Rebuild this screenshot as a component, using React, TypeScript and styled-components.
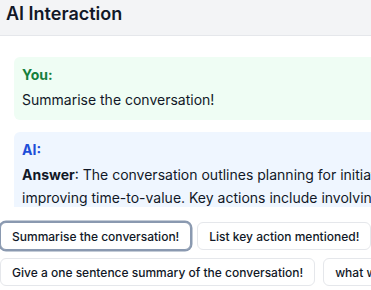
import React from "react";
import styled, { createGlobalStyle } from "styled-components";

const Global = createGlobalStyle`
  html, body {
    margin: 0;
    padding: 0;
    overflow: hidden;
    background: #ffffff;
  }
  body {
    font-family: Inter, "Noto Sans", sans-serif;
    color: #111827;
  }
`;

const Page = styled.div`
  width: 510px;
  height: 290px;
  display: flex;
  flex-direction: column;
  background: #ffffff;
`;

const Header = styled.header`
  flex: 0 0 auto;
  box-sizing: border-box;
  height: 36px;
  padding: 0 6px 7px;
  background: #f3f4f6;
  border-bottom: 1px solid #e5e7eb;
`;

const Title = styled.h1`
  margin: 0;
  font-size: 18px;
  line-height: 28px;
  font-weight: 600;
  color: #111827;
`;

const Messages = styled.div`
  flex: 0 0 171px;
  overflow: hidden;
  box-sizing: border-box;
  padding: 21px 14px 0;
  display: flex;
  flex-direction: column;
  gap: 12px;
`;

const Bubble = styled.div<{ $tone: "user" | "ai" }>`
  background: ${(p) => (p.$tone === "user" ? "#effdf4" : "#eff6ff")};
  border-radius: 6px;
  padding: 8px 8px;
  flex: 0 0 auto;
`;

const Label = styled.div<{ $tone: "user" | "ai" }>`
  font-size: 14px;
  line-height: 20px;
  font-weight: 700;
  margin-bottom: 4px;
  color: ${(p) => (p.$tone === "user" ? "#15803d" : "#1d4ed8")};
`;

const Text = styled.p`
  margin: 0;
  font-size: 14px;
  line-height: 22.75px;
  color: #111827;
`;

const Suggestions = styled.div`
  flex: 1 1 auto;
  box-sizing: border-box;
  padding: 15px 0 0 0;
  display: flex;
  flex-wrap: wrap;
  align-content: flex-start;
  gap: 8px;
`;

const Chip = styled.button<{ $focused?: boolean }>`
  height: 28px;
  box-sizing: border-box;
  padding: 0 11px;
  border-radius: 6px;
  background: #ffffff;
  border: 1px solid ${(p) => (p.$focused ? "#8a99b0" : "#e5e7eb")};
  box-shadow: ${(p) => (p.$focused ? "0 0 0 1.5px #8a99b0" : "none")};
  margin-right: ${(p) => (p.$focused ? "-2px" : "0")};
  font-family: Inter, "Noto Sans", sans-serif;
  font-size: 12px;
  font-weight: 500;
  color: #111827;
  white-space: nowrap;
  cursor: pointer;
`;

const suggestions = [
  "Summarise the conversation!",
  "List key action mentioned!",
  "Give a one sentence summary of the conversation!",
  "what were the next steps?",
];

export default function App() {
  return (
    <>
      <Global />
      <Page>
        <Header>
          <Title>AI Interaction</Title>
        </Header>
        <Messages>
          <Bubble $tone="user">
            <Label $tone="user">You:</Label>
            <Text>Summarise the conversation!</Text>
          </Bubble>
          <Bubble $tone="ai">
            <Label $tone="ai">AI:</Label>
            <Text>
              <strong>Answer</strong>: The conversation outlines planning for initiatives aimed at
              improving time-to-value. Key actions include involving the customer success team early,
              defining clear milestones and sharing progress updates.
            </Text>
          </Bubble>
        </Messages>
        <Suggestions>
          {suggestions.map((s, i) => (
            <Chip key={s} $focused={i === 0}>
              {s}
            </Chip>
          ))}
        </Suggestions>
      </Page>
    </>
  );
}
